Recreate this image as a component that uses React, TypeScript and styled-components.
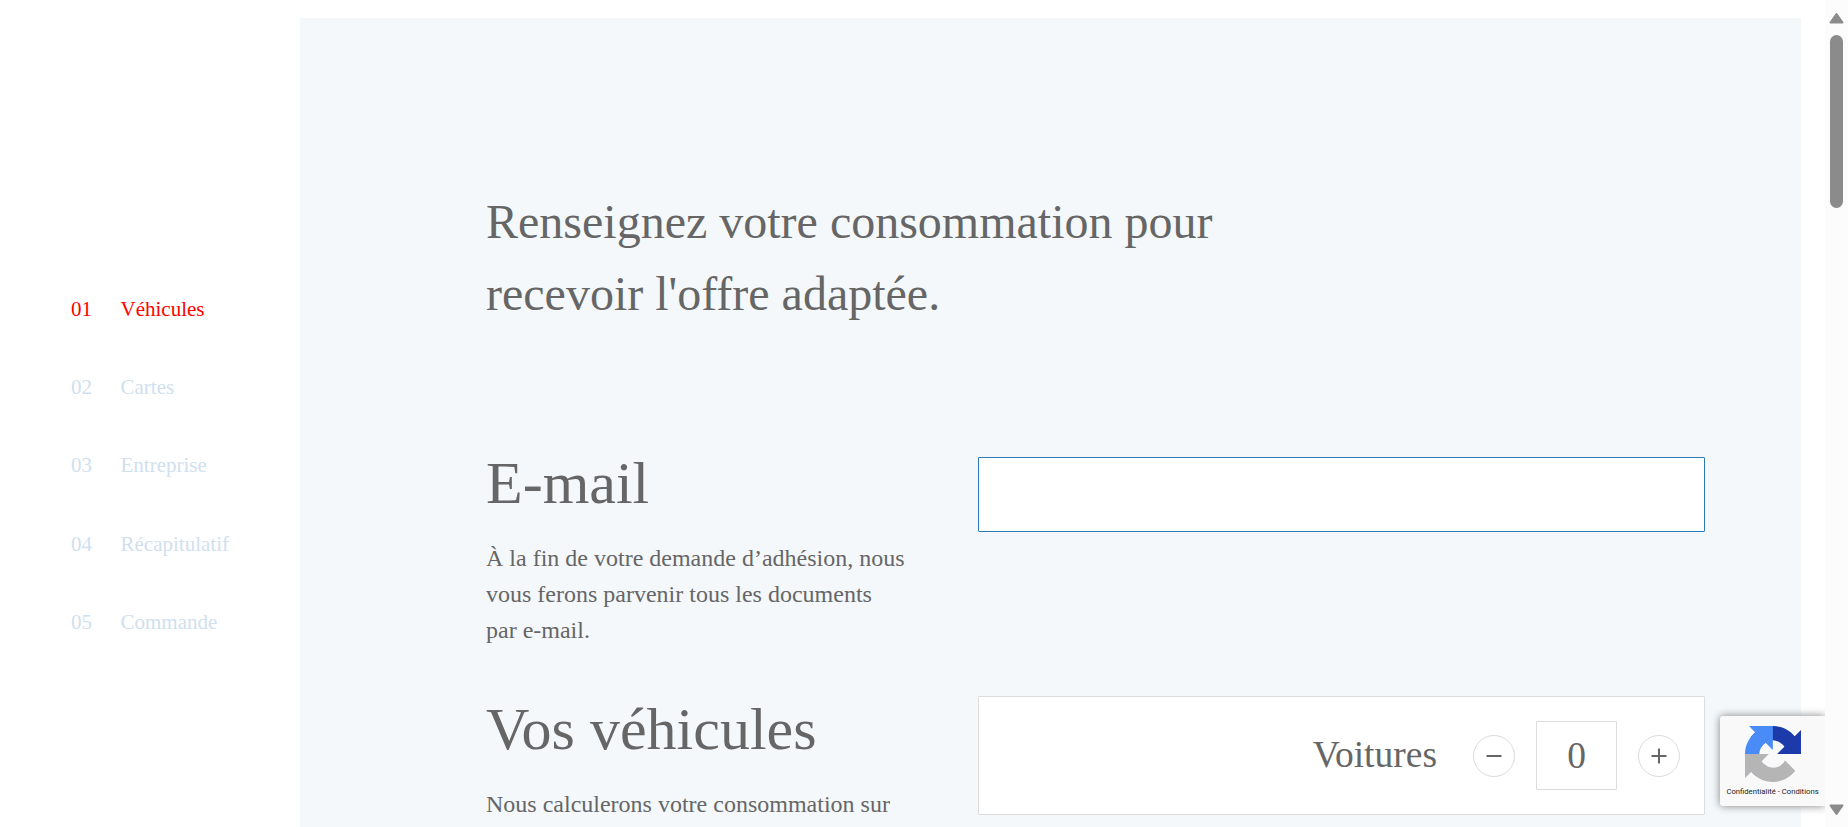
import React from "react";
import styled, { createGlobalStyle } from "styled-components";

const GlobalStyle = createGlobalStyle`
  *, *::before, *::after { box-sizing: border-box; }
  body {
    margin: 0;
    overflow: hidden;
    background: #fff;
    color: #666;
    font-family: "Liberation Serif", "Times New Roman", serif;
  }
  h1, h2, p, ol { margin: 0; padding: 0; font-weight: 400; }
`;

const Page = styled.div`
  display: flex;
  position: relative;
  width: 100vw;
  height: 100vh;
  overflow: hidden;
`;

const Sidebar = styled.nav`
  flex: 0 0 300px;
  padding: 297px 0 0 71px;
`;

const StepList = styled.ol`
  display: flex;
  flex-direction: column;
  gap: 48.2px;
  list-style: none;
`;

const Step = styled.li<{ $active?: boolean }>`
  display: flex;
  height: 30px;
  font-size: 21px;
  line-height: 25px;
  color: ${(p) => (p.$active ? "#f00" : "#cfe0ef")};
`;

const StepNumber = styled.span`
  width: 49.5px;
`;

const Panel = styled.main`
  flex: 0 0 1501px;
  margin-top: 18px;
  padding: 168px 96px 0 186px;
  background: #f4f8fb;
  overflow: hidden;
`;

const Title = styled.h1`
  font-size: 48px;
  line-height: 72px;
`;

const Section = styled.section<{ $top: number }>`
  display: grid;
  grid-template-columns: 492px 727px;
  align-items: start;
  margin-top: ${(p) => p.$top}px;
`;

const SectionTitle = styled.h2`
  font-size: 60px;
  line-height: 60px;
`;

const Text = styled.p`
  margin-top: 27px;
  font-size: 24px;
  line-height: 36px;
  white-space: nowrap;
`;

const EmailInput = styled.input`
  width: 727px;
  height: 75px;
  margin-top: 4px;
  padding: 0 20px;
  border: 1px solid #2b79b5;
  border-radius: 1px;
  outline: none;
  background: #fff;
  font: inherit;
  font-size: 24px;
`;

const CounterCard = styled.div`
  display: flex;
  align-items: center;
  justify-content: flex-end;
  gap: 21px;
  height: 119px;
  margin-top: -3px;
  padding-right: 24px;
  border: 1px solid #dcdcdc;
  border-radius: 1px;
  background: #fff;
`;

const CounterLabel = styled.span`
  margin-right: 15px;
  padding-bottom: 2px;
  font-size: 37.5px;
  line-height: 48px;
`;

const RoundButton = styled.button`
  display: grid;
  place-items: center;
  width: 42px;
  height: 42px;
  padding: 0;
  border: 1px solid #dcdcdc;
  border-radius: 50%;
  background: #fff;
`;

const Count = styled.output`
  display: grid;
  place-items: center;
  width: 81px;
  height: 69px;
  border: 1px solid #dcdcdc;
  border-radius: 1px;
  font-size: 37.5px;
`;

const Badge = styled.aside`
  position: absolute;
  top: 716px;
  right: 23px;
  display: flex;
  flex-direction: column;
  align-items: center;
  width: 105px;
  height: 90px;
  padding-top: 10px;
  border-radius: 3px 0 0 3px;
  background: #f9f9f9;
  box-shadow: 0 0 8px gray;
  clip-path: inset(-12px 0 -12px -12px);
`;

const BadgeText = styled.span`
  margin-top: 4px;
  color: #222;
  font: 7.7px/12px Roboto, sans-serif;
  white-space: nowrap;
`;

const Scrollbar = styled.div`
  position: absolute;
  top: 0;
  right: 0;
  display: flex;
  flex-direction: column;
  align-items: center;
  width: 23px;
  height: 100%;
  padding: 12px 0 11px;
  background: #fcfcfc;
`;

const Thumb = styled.div`
  width: 13px;
  height: 173px;
  margin: 11px 0 auto;
  border-radius: 7px;
  background: #8b8b8b;
`;

const Arrow = ({ down }: { down?: boolean }) => (
  <svg width="15" height="12" viewBox="0 0 15 12">
    <path
      d={down ? "M1.5 1.5h12L7.5 10z" : "M1.5 10.5h12L7.5 2z"}
      fill="#8b8b8b"
      stroke="#8b8b8b"
      strokeWidth="2"
      strokeLinejoin="round"
    />
  </svg>
);

const Sign = ({ plus }: { plus?: boolean }) => (
  <svg width="16" height="16" viewBox="0 0 16 16" stroke="#666" strokeWidth="2">
    <path d={plus ? "M.5 8h15M8 .5v15" : "M.5 8h15"} />
  </svg>
);

const RecaptchaLogo = () => (
  <svg width="56" height="56" viewBox="0 0 64 64">
    <path fill="#1c3aa9" d="M64 31.955l-.033-1.37V4.687l-7.16 7.16C50.948 4.674 42.033.093 32.05.093c-10.4 0-19.622 4.96-25.458 12.64l11.736 11.86a15.55 15.55 0 0 1 4.754-5.334c2.05-1.6 4.952-2.906 8.968-2.906.485 0 .86.057 1.135.163 4.976.393 9.288 3.14 11.828 7.124l-8.307 8.307L64 31.953" />
    <path fill="#4a8cf7" d="M31.862.094l-1.37.033H4.594l7.16 7.16C4.58 13.147 0 22.06 0 32.046c0 10.4 4.96 19.622 12.64 25.458L24.5 45.768a15.56 15.56 0 0 1-5.334-4.754c-1.6-2.05-2.906-4.952-2.906-8.968 0-.485.057-.86.163-1.135.393-4.976 3.14-9.288 7.124-11.828l8.307 8.307L31.86.095" />
    <path fill="#b5b5b5" d="M.001 32.045l.033 1.37v25.898l7.16-7.16c5.86 7.173 14.774 11.754 24.76 11.754 10.4 0 19.622-4.96 25.458-12.64l-11.736-11.86a15.55 15.55 0 0 1-4.754 5.334c-2.05 1.6-4.952 2.906-8.968 2.906-.485 0-.86-.057-1.135-.163-4.976-.393-9.288-3.14-11.828-7.124l8.307-8.307c-10.522.04-22.4.066-27.295-.005" />
  </svg>
);

const steps = ["Véhicules", "Cartes", "Entreprise", "Récapitulatif", "Commande"];

export default function App() {
  return (
    <Page>
      <GlobalStyle />
      <Sidebar>
        <StepList>
          {steps.map((name, i) => (
            <Step key={name} $active={i === 0}>
              <StepNumber>0{i + 1}</StepNumber>
              <span>{name}</span>
            </Step>
          ))}
        </StepList>
      </Sidebar>
      <Panel>
        <Title>
          Renseignez votre consommation pour
          <br />
          recevoir l'offre adaptée.
        </Title>
        <Section $top={123}>
          <div>
            <SectionTitle>E-mail</SectionTitle>
            <Text>
              À la fin de votre demande d’adhésion, nous
              <br />
              vous ferons parvenir tous les documents
              <br />
              par e-mail.
            </Text>
          </div>
          <EmailInput type="email" aria-label="E-mail" />
        </Section>
        <Section $top={51}>
          <div>
            <SectionTitle>Vos véhicules</SectionTitle>
            <Text>Nous calculerons votre consommation sur</Text>
          </div>
          <CounterCard>
            <CounterLabel>Voitures</CounterLabel>
            <RoundButton aria-label="Moins">
              <Sign />
            </RoundButton>
            <Count>0</Count>
            <RoundButton aria-label="Plus">
              <Sign plus />
            </RoundButton>
          </CounterCard>
        </Section>
      </Panel>
      <Badge>
        <RecaptchaLogo />
        <BadgeText>Confidentialité - Conditions</BadgeText>
      </Badge>
      <Scrollbar>
        <Arrow />
        <Thumb />
        <Arrow down />
      </Scrollbar>
    </Page>
  );
}
